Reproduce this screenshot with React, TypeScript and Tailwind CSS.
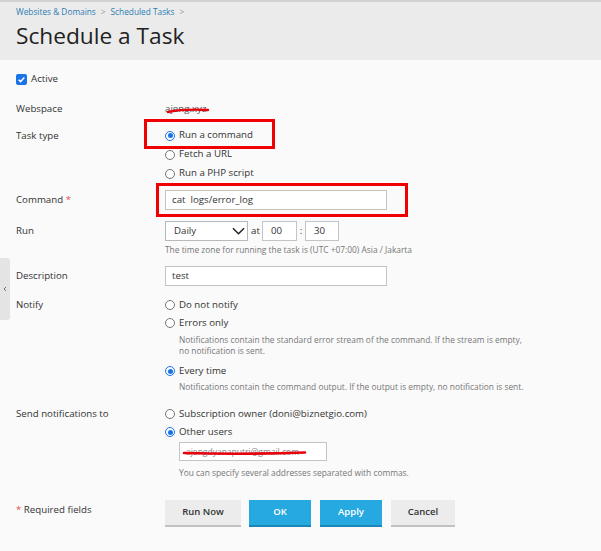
import React from 'react';

const Radio: React.FC<{ checked?: boolean }> = ({ checked }) =>
  checked ? (
    <span className="w-[10px] h-[10px] rounded-full border-[1.5px] border-[#1a73e8] bg-white flex items-center justify-center shrink-0">
      <span className="w-[5px] h-[5px] rounded-full bg-[#1a73e8]" />
    </span>
  ) : (
    <span className="w-[10px] h-[10px] rounded-full border border-[#767676] bg-white shrink-0" />
  );

const RadioLine: React.FC<{ checked?: boolean; label: string }> = ({ checked, label }) => (
  <div className="h-[18px] flex items-center gap-[4px]">
    <Radio checked={checked} />
    <span>{label}</span>
  </div>
);

const Hint: React.FC<{ children: React.ReactNode; className?: string }> = ({ children, className }) => (
  <div className={`text-[8.4px] leading-[11px] text-[#777] ${className ?? ''}`}>{children}</div>
);

const App: React.FC = () => {
  return (
    <div className="relative min-h-[551px] w-[601px] overflow-hidden bg-[#fafafa] font-['Open_Sans',sans-serif] text-[9.7px] text-[#333]">
      {/* Top header */}
      <div className="h-[2px] bg-[#d2d2d2]" />
      <div className="h-[58px] bg-[#ebebeb] px-4 pt-[4px]">
        <div className="flex items-center h-[12px] text-[8.3px] text-[#2b7bb3]">
          <span>Websites &amp; Domains</span>
          <span className="mx-[5px] text-[#999]">&gt;</span>
          <span>Scheduled Tasks</span>
          <span className="mx-[5px] text-[#999]">&gt;</span>
        </div>
        <h1 className="mt-[3px] text-[22.7px] leading-[30px] text-[#222]">Schedule a Task</h1>
      </div>

      {/* Form */}
      <div className="px-4 pt-[9px]">
        <div className="h-[20px] flex items-center gap-[4px]">
          <span className="w-[11px] h-[11px] rounded-[2px] bg-[#1a73e8] flex items-center justify-center">
            <svg viewBox="0 0 12 12" className="w-[9px] h-[9px]">
              <path d="M2.2 6.2 L4.8 8.8 L9.8 3.4" fill="none" stroke="white" strokeWidth="1.9" />
            </svg>
          </span>
          <span>Active</span>
        </div>

        <div className="mt-[10px] h-[20px] flex items-center">
          <div className="w-[149px]">Webspace</div>
          <div className="text-[#555]">ajeng.xyz</div>
        </div>

        <div className="mt-[7px] flex">
          <div className="w-[149px] h-[19px] leading-[19px]">Task type</div>
          <div>
            <div className="h-[19px] flex items-center gap-[4px]">
              <Radio checked />
              <span>Run a command</span>
            </div>
            <div className="h-[19px] flex items-center gap-[4px]">
              <Radio />
              <span>Fetch a URL</span>
            </div>
            <div className="h-[19px] flex items-center gap-[4px]">
              <Radio />
              <span>Run a PHP script</span>
            </div>
          </div>
        </div>

        <div className="mt-[7px] flex items-center">
          <div className="w-[149px] leading-[20px]">
            Command <span className="text-[#e05050]">*</span>
          </div>
          <div className="w-[222px] h-[20px] border border-[#c4c4c4] bg-white px-[6px] leading-[18px]">
            cat&nbsp; logs/error_log
          </div>
        </div>

        <div className="mt-[11px] flex">
          <div className="w-[149px] leading-[20px]">Run</div>
          <div>
            <div className="flex items-center h-[20px]">
              <div className="w-[83px] h-[20px] border border-[#b8b8b8] bg-white pl-[8px] pr-[2px] flex items-center justify-between">
                <span>Daily</span>
                <svg viewBox="0 0 14 8" className="w-[13px] h-[8px]">
                  <path d="M1 1 L7 7 L13 1" fill="none" stroke="#222" strokeWidth="1.6" />
                </svg>
              </div>
              <span className="ml-[3px] w-[11px]">at</span>
              <div className="w-[35px] h-[20px] border border-[#c4c4c4] bg-white pl-[8px] leading-[18px]">00</div>
              <span className="w-[8px] text-center">:</span>
              <div className="w-[34px] h-[20px] border border-[#c4c4c4] bg-white pl-[8px] leading-[18px]">30</div>
            </div>
            <Hint className="mt-[3px] leading-[12px]">
              The time zone for running the task is (UTC +07:00) Asia / Jakarta
            </Hint>
          </div>
        </div>

        <div className="mt-[10px] flex items-center">
          <div className="w-[149px] leading-[20px]">Description</div>
          <div className="w-[222px] h-[20px] border border-[#c4c4c4] bg-white px-[6px] leading-[18px]">test</div>
        </div>

        <div className="mt-[10px] flex">
          <div className="w-[149px] h-[18px] leading-[18px]">Notify</div>
          <div>
            <RadioLine label="Do not notify" />
            <RadioLine label="Errors only" />
            <Hint className="mt-[2px] ml-[14px] w-[380px]">
              Notifications contain the standard error stream of the command. If the stream is empty,
              <br />
              no notification is sent.
            </Hint>
            <div className="mt-[6px]">
              <RadioLine checked label="Every time" />
            </div>
            <Hint className="mt-[1px] ml-[14px]">
              Notifications contain the command output. If the output is empty, no notification is sent.
            </Hint>
          </div>
        </div>

        <div className="mt-[13px] flex">
          <div className="w-[149px] h-[18px] leading-[18px]">Send notifications to</div>
          <div>
            <RadioLine label="Subscription owner (doni@biznetgio.com)" />
            <RadioLine checked label="Other users" />
            <div className="mt-[1px] ml-[14px] w-[148px] h-[19px] border border-[#c4c4c4] bg-white px-[6px] leading-[17px] text-[8.5px] text-[#888]">
              ajengdyanaputri@gmail.com
            </div>
            <Hint className="mt-[6px] ml-[14px]">You can specify several addresses separated with commas.</Hint>
          </div>
        </div>

        <div className="mt-[22px] flex items-start">
          <div className="w-[149px] leading-[20px]">
            <span className="text-[#e05050]">*</span> Required fields
          </div>
          <div className="flex gap-[8px] text-[9.5px] font-semibold">
            <button className="w-[76px] h-[27px] bg-[#ececec] border-b-2 border-[#c2c2c2] text-[#333]">Run Now</button>
            <button className="w-[62px] h-[27px] bg-[#26a9e0] border-b-2 border-[#1b86b8] text-white">OK</button>
            <button className="ml-[1px] w-[62px] h-[27px] bg-[#26a9e0] border-b-2 border-[#1b86b8] text-white">Apply</button>
            <button className="ml-[1px] w-[64px] h-[27px] bg-[#ececec] border-b-2 border-[#c2c2c2] text-[#333]">Cancel</button>
          </div>
        </div>
      </div>

      {/* Collapsed side tab */}
      <div className="absolute left-0 top-[258px] w-[10px] h-[62px] bg-[#e4e4e4] rounded-r-[3px] flex items-center justify-center">
        <svg viewBox="0 0 6 8" className="w-[4px] h-[6px]">
          <path d="M4.5 1 L1.5 4 L4.5 7" fill="none" stroke="#555" strokeWidth="1.2" />
        </svg>
      </div>

      {/* Red annotation boxes */}
      <div className="absolute left-[144px] top-[119px] w-[131px] h-[30px] border-[3px] border-[#f00000]" />
      <div className="absolute left-[156px] top-[183px] w-[252px] h-[34px] border-[3px] border-[#f00000]" />

      {/* Red redaction strokes */}
      <svg className="absolute left-[166px] top-[106px] w-[44px] h-[8px]" viewBox="0 0 44 8">
        <path d="M2 6 C 12 4, 24 3, 42 4" fill="none" stroke="#e8000b" strokeWidth="2.4" strokeLinecap="round" />
      </svg>
      <svg className="absolute left-[182px] top-[449px] w-[126px] h-[8px]" viewBox="0 0 126 8">
        <path d="M2 4 C 40 5, 80 5, 123 3.5" fill="none" stroke="#e8000b" strokeWidth="2.6" strokeLinecap="round" />
      </svg>
    </div>
  );
};

export default App;
